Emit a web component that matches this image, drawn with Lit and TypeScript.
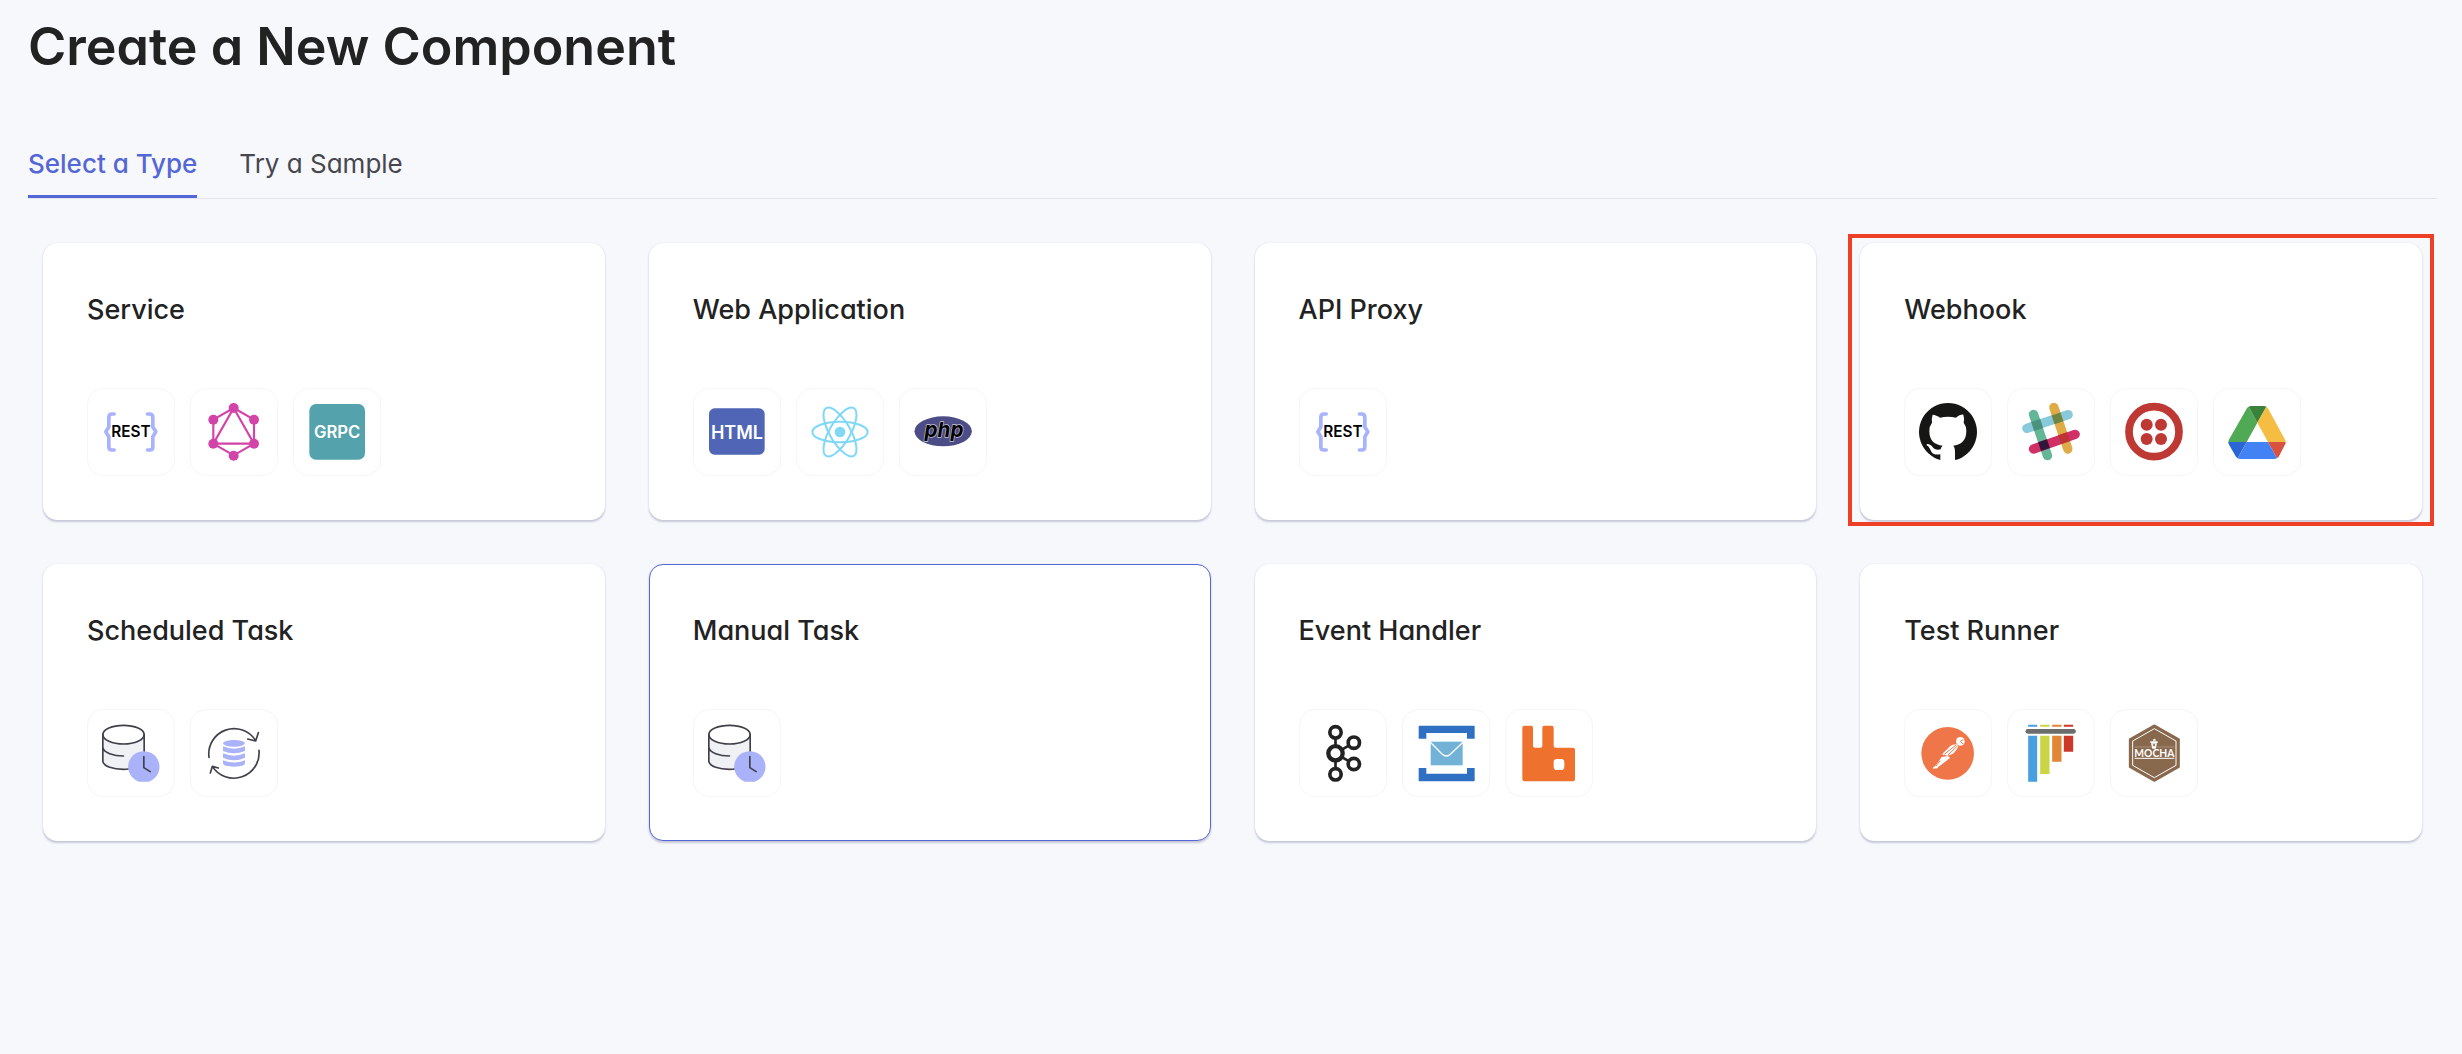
import { LitElement, html, svg, css, nothing, type SVGTemplateResult } from "lit";
import { customElement, state, property } from "lit/decorators.js";
import { classMap } from "lit/directives/class-map.js";

interface Tool {
  name: string;
  /** Centre of the drawing in its own coordinate space. */
  cx: number;
  cy: number;
  art: SVGTemplateResult;
}

interface ComponentType {
  title: string;
  tools: Tool[];
  active?: boolean;
  marked?: boolean;
}

const FONT = "Inter, 'Liberation Sans', sans-serif";

const rest: Tool = {
  name: "REST", cx: 153.5, cy: 156,
  art: svg`
    <g fill="none" stroke="#a9b3fb" stroke-width="11" stroke-linecap="round" stroke-linejoin="round">
      <path d="M103 102H97Q87 102 87 112V141L78 155.500L87 170V200Q87 210 97 210H103"/>
      <path d="M203 102H209Q219 102 219 112V141L228 155.500L219 170V200Q219 210 209 210H203"/>
    </g>
    <text x="153" y="171" font-family=${FONT} font-size="46" font-weight="600" text-anchor="middle" fill="#000">REST</text>`,
};

const graphql: Tool = {
  name: "GraphQL", cx: 462, cy: 156,
  art: svg`
    <path d="M461 84L522 119V191L461 226L400 191V119ZM461 84L522 191H400Z" fill="none" stroke="#d344a8" stroke-width="6.500"/>
    <g fill="#d344a8">
      <circle cx="461" cy="84" r="15"/><circle cx="522" cy="119" r="15"/><circle cx="522" cy="191" r="15"/>
      <circle cx="461" cy="227" r="15"/><circle cx="400" cy="191" r="15"/><circle cx="400" cy="119" r="15"/>
    </g>`,
};

const grpc: Tool = {
  name: "gRPC", cx: 770, cy: 156,
  art: svg`
    <rect x="687" y="72" width="167" height="167" rx="20" fill="#54a3ac"/>
    <text x="770.500" y="173" font-family=${FONT} font-size="50" font-weight="600" text-anchor="middle" fill="#fff">GRPC</text>`,
};

const htmlTool: Tool = {
  name: "HTML", cx: 141, cy: 156,
  art: svg`
    <rect x="57" y="85" width="167" height="139" rx="17" fill="#5065b6"/>
    <text x="141" y="177" font-family=${FONT} font-size="54" font-weight="600" text-anchor="middle" fill="#fff">HTML</text>`,
};

const react: Tool = {
  name: "React", cx: 449, cy: 156,
  art: svg`
    <g fill="none" stroke="#80d8f7" stroke-width="6">
      <ellipse cx="449" cy="156" rx="83" ry="31"/>
      <ellipse cx="449" cy="156" rx="83" ry="31" transform="rotate(60 449 156)"/>
      <ellipse cx="449" cy="156" rx="83" ry="31" transform="rotate(-60 449 156)"/>
    </g>
    <circle cx="449" cy="156" r="16" fill="#80d8f7"/>`,
};

const php: Tool = {
  name: "PHP", cx: 757, cy: 156,
  art: svg`
    <ellipse cx="757.500" cy="154" rx="86" ry="45" fill="#4c4c86"/>
    <text x="760" y="170" font-family=${FONT} font-size="62" font-weight="700" font-style="italic" text-anchor="middle"
      fill="#000" stroke="#c9c9da" stroke-width="4" stroke-linejoin="round" paint-order="stroke">php</text>`,
};

const github: Tool = {
  name: "GitHub", cx: 144, cy: 156,
  art: svg`
    <path fill="#161614" fill-rule="evenodd" d="M121 240A87 87 0 1 1 167 240Q165 241 165 236V213Q165 203 160 197C180 194 199 185 199 153Q199 138 191 128Q194 116 190 104C184 103 176 107 168 113Q144 108 120 113C114 108 104 104 98 104Q94 116 96 128Q88 138 88 153C88 183 104 194 128 197Q123 200 122 208C112 211 102 208 97 200C90 191 78 190 80 196C88 200 91 209 94 215C100 224 110 225 121 223Z"/>`,
};

const slack: Tool = {
  name: "Slack", cx: 452.5, cy: 156,
  art: svg`
    <g fill="none" stroke-width="28" stroke-linecap="round">
      <path d="M380 145L504 104" stroke="#88c9dc"/>
      <path d="M400 103L442 227" stroke="#63b696"/>
      <path d="M461 82L503 207" stroke="#dfab46"/>
      <path d="M400 207L525 163" stroke="#d03066"/>
    </g>
    <rect x="-14" y="-14" width="28" height="28" transform="translate(411 135) rotate(-18.500)" fill="#4a9180"/>
    <rect x="-14" y="-14" width="28" height="28" transform="translate(472 115) rotate(-18.500)" fill="#6d8646"/>
    <rect x="-14" y="-14" width="28" height="28" transform="translate(431.500 195.500) rotate(-18.500)" fill="#341438"/>
    <rect x="-14" y="-14" width="28" height="28" transform="translate(491.500 174.500) rotate(-18.500)" fill="#bd3434"/>`,
};

const twilio: Tool = {
  name: "Twilio", cx: 162, cy: 156,
  art: svg`
    <circle cx="162" cy="155" r="75" fill="none" stroke="#be3934" stroke-width="23"/>
    <g fill="#be3934">
      <circle cx="140" cy="134" r="18"/><circle cx="183" cy="134" r="18"/>
      <circle cx="140" cy="177" r="18"/><circle cx="183" cy="177" r="18"/>
    </g>`,
};

const drive: Tool = {
  name: "Google Drive", cx: 470, cy: 156,
  art: svg`
    <path fill="#50aa55" d="M445 80Q441 82 439 86L387 177Q384 181 384 186H439L471 128Z"/>
    <path fill="#3b813a" d="M445 80Q448 78 453 78H490Q495 78 498 80L471 128Z"/>
    <path fill="#f5bd42" d="M498 80Q502 83 504 87L553 177Q556 181 556 186H503L471 128Z"/>
    <path fill="#2a66d4" d="M384 186H439L412 235Q408 232 406 229L387 196Q384 191 384 186Z"/>
    <path fill="#4382f5" d="M439 186H503L530 235Q526 237 522 237H420Q415 237 412 235Z"/>
    <path fill="#d9513f" d="M503 186H556Q556 191 553 196L536 229Q533 233 530 235Z"/>`,
};

const scheduled: Tool = {
  name: "Scheduled database job", cx: 153.5, cy: 157,
  art: svg`
    <path d="M69 101V182C72 198 100 206 131 206C162 206 193 195 193 182V101Z" fill="#f0f1f5"/>
    <ellipse cx="131" cy="102" rx="62" ry="28" fill="#fff"/>
    <g fill="none" stroke="#40404b" stroke-width="5" stroke-linecap="round">
      <ellipse cx="131" cy="102" rx="62" ry="28"/>
      <path d="M69 102V182C72 198 100 206 131 206C136 206 141 206 146 205M193 102V160M69 140C72 156 100 166 131 166"/>
    </g>
    <path d="M177 243A47 47 0 1 1 207 243Z" fill="#aab3f9"/>
    <path d="M192 168V201L211 213" fill="none" stroke="#40404b" stroke-width="5" stroke-linecap="round" stroke-linejoin="round"/>`,
};

const sync: Tool = {
  name: "Database sync", cx: 462, cy: 157,
  art: svg`
    <g fill="none" stroke="#40404b" stroke-width="5" stroke-linecap="round" stroke-linejoin="round">
      <path d="M387 170A76 76 0 0 1 527 120M503 115L527 121L535 96"/>
      <path d="M537 149A76 76 0 0 1 397 197M415 202L397 197L391 217"/>
    </g>
    <g fill="#aab3f9">
      <ellipse cx="462" cy="128" rx="33" ry="10"/>
      <path d="M429 137Q462 151 495 137V151Q462 165 429 151Z"/>
      <path d="M429 158Q462 172 495 158V171Q462 186 429 171Z"/>
      <path d="M429 179Q462 192 495 179V188Q495 198 462 198Q429 198 429 188Z"/>
    </g>`,
};

const kafka: Tool = {
  name: "Kafka", cx: 157.5, cy: 157,
  art: svg`
    <path d="M135 110V208M135 158L176 134M135 158L176 182" stroke="#222" stroke-width="8" fill="none"/>
    <g fill="#fff" stroke="#222" stroke-width="11">
      <circle cx="135" cy="95" r="17"/><circle cx="135" cy="221" r="17"/>
      <circle cx="190" cy="126" r="17"/><circle cx="190" cy="190" r="17"/>
      <circle cx="135" cy="158" r="21.500" stroke-width="13"/>
    </g>`,
};

const serviceBus: Tool = {
  name: "Azure Service Bus", cx: 466, cy: 157,
  art: svg`
    <path fill="#2f70c2" d="M386 75H550L552 77V114H529V97H407V114H384V77Z"/>
    <path fill="#2f70c2" d="M384 202H407V219H529V202H552V240L550 242H386L384 240Z"/>
    <rect x="420" y="123" width="96" height="71" fill="#71b2d6"/>
    <path d="M419 125L454 160Q467 172 480 160L517 125" fill="none" stroke="#fff" stroke-width="4"/>`,
};

const rabbit: Tool = {
  name: "RabbitMQ", cx: 774, cy: 157,
  art: svg`
    <path fill="#ee712d" fill-rule="evenodd" d="M700 75H720Q726 75 726 81V135Q726 141 732 141H748Q754 141 754 135V81Q754 75 760 75H782Q788 75 788 81V135Q788 141 794 141H846Q852 141 852 147V236Q852 242 846 242H700Q694 242 694 236V81Q694 75 700 75ZM798 175Q788 175 788 185V198Q788 208 798 208H810Q820 208 820 198V185Q820 175 810 175Z"/>`,
};

const postman: Tool = {
  name: "Postman", cx: 144, cy: 157,
  art: svg`
    <circle cx="143" cy="158" r="79" fill="#ee7648"/>
    <circle cx="181" cy="122" r="13" fill="#fff"/>
    <path d="M126 161L151 136Q160 130 169 131L175 137Q171 149 159 159L143 165Z" fill="#fff"/>
    <path d="M125 169L144 166L150 172L119 196Q112 199 113 203L98 204Q98 200 105 197Z" fill="#fff"/>
    <path d="M133 161L168 133M144 163L172 136M181 122L190 117M181 122L189 130M120 180L108 196" stroke="#ee7648" stroke-width="3" fill="none"/>`,
};

const pytest: Tool = {
  name: "pytest", cx: 452.5, cy: 157,
  art: svg`
    <path fill="#489fdf" d="M384 72H411V78H384ZM384 105H411V243H384Z"/>
    <path fill="#cad546" d="M420 72H448V78H420ZM420 105H448V220H420Z"/>
    <path fill="#e08636" d="M456 72H484V78H456ZM456 105H484V183H456Z"/>
    <path fill="#cd3828" d="M491 72H519V78H491ZM491 105H519V153H491Z"/>
    <rect x="376" y="85" width="151" height="14" rx="7" fill="#6a6d6c"/>`,
};

const mocha: Tool = {
  name: "Mocha", cx: 761, cy: 157,
  art: svg`
    <path d="M762 74L836 116V199L762 241L688 199V116Z" fill="#89694e" stroke="#89694e" stroke-width="5" stroke-linejoin="round"/>
    <path d="M762 84L827 121V194L762 231L697 194V121Z" fill="none" stroke="#fff" stroke-width="3"/>
    <rect x="700" y="137" width="124" height="37" fill="#89694e"/>
    <path d="M703 139H822" stroke="#b7a595" stroke-width="2"/>
    <path d="M703 173H822" stroke="#fff" stroke-width="3"/>
    <path d="M752 128H770L766 144H756ZM750 122H772V127H750ZM758 120Q757 115 762 114Q768 116 766 120Z" fill="#fff"/>
    <path d="M757 131H765L763 137H759Z" fill="#89694e"/>
    <text x="762" y="168" font-family="Lato, sans-serif" font-size="31" font-weight="700" text-anchor="middle" fill="#fff">MOCHA</text>`,
};

const TYPES: ComponentType[] = [
  { title: "Service", tools: [rest, graphql, grpc] },
  { title: "Web Application", tools: [htmlTool, react, php] },
  { title: "API Proxy", tools: [rest] },
  { title: "Webhook", tools: [github, slack, twilio, drive], marked: true },
  { title: "Scheduled Task", tools: [scheduled, sync] },
  { title: "Manual Task", tools: [scheduled], active: true },
  { title: "Event Handler", tools: [kafka, serviceBus, rabbit] },
  { title: "Test Runner", tools: [postman, pytest, mocha] },
];

@customElement("type-card")
export class TypeCard extends LitElement {
  @property({ attribute: false }) type!: ComponentType;

  static styles = css`
    :host {
      display: block;
      position: relative;
    }
    .card {
      display: flex;
      flex-direction: column;
      gap: 61px;
      width: 100%;
      box-sizing: border-box;
      padding: 49px 43px 43px;
      border: 1px solid #fff;
      border-radius: 14px;
      background: #fff;
      box-shadow: 0 2px 2px #c6c9d8, 0 0 2px #e3e5ee;
      color: #222;
      font: inherit;
      text-align: left;
      cursor: pointer;
    }
    .active {
      border-color: #5567d5;
    }
    .title {
      font-size: 27px;
      line-height: 34px;
      font-weight: 500;
    }
    .tools {
      display: flex;
      gap: 15px;
    }
    .tile {
      display: flex;
      align-items: center;
      justify-content: center;
      width: 88px;
      height: 88px;
      box-sizing: border-box;
      border: 1px solid #f5f6fa;
      border-radius: 16px;
    }
    .art {
      width: 58px;
      height: 58px;
      overflow: visible;
    }
    .marker {
      position: absolute;
      inset: -9px -12px -6px;
      border: 4px solid #ee4027;
      pointer-events: none;
    }
  `;

  render() {
    const { title, tools, active, marked } = this.type;
    return html`
      <button type="button" class=${classMap({ card: true, active: !!active })}>
        <span class="title">${title}</span>
        <span class="tools">
          ${tools.map(
            (t) => html`<span class="tile">
              <svg class="art" viewBox="${t.cx - 87} ${t.cy - 87} 174 174" role="img" aria-label=${t.name}>${t.art}</svg>
            </span>`
          )}
        </span>
      </button>
      ${marked ? html`<div class="marker"></div>` : nothing}
    `;
  }
}

@customElement("app-root")
export class AppRoot extends LitElement {
  @state() private tab = 0;

  static styles = css`
    :host {
      display: block;
      min-height: 100vh;
      box-sizing: border-box;
      padding: 17px 25px 44px 28px;
      background: #f7f8fc;
      color: #222;
      font-family: Inter, "Liberation Sans", sans-serif;
      font-feature-settings: "cv11";
    }
    .heading {
      margin: 0;
      font-size: 52px;
      line-height: 60px;
      font-weight: 600;
    }
    .tabs {
      display: flex;
      gap: 42px;
      margin-top: 71px;
      border-bottom: 1px solid #e4e5ec;
    }
    .tab {
      padding: 0 0 15px;
      border: 0;
      border-bottom: 3px solid transparent;
      background: none;
      color: #46474f;
      font: inherit;
      font-size: 26px;
      line-height: 32px;
      cursor: pointer;
    }
    .current {
      border-color: #5567d5;
      color: #5567d5;
      font-weight: 500;
    }
    .grid {
      display: grid;
      grid-template-columns: repeat(4, minmax(0, 1fr));
      gap: 44px;
      padding: 44px 15px 0;
    }
  `;

  render() {
    return html`
      <h1 class="heading">Create a New Component</h1>
      <div class="tabs" role="tablist">
        ${["Select a Type", "Try a Sample"].map(
          (label, i) => html`<button
            type="button"
            role="tab"
            aria-selected=${i === this.tab ? "true" : "false"}
            class=${classMap({ tab: true, current: i === this.tab })}
            @click=${() => (this.tab = i)}
          >${label}</button>`
        )}
      </div>
      <main class="grid">
        ${TYPES.map((type) => html`<type-card .type=${type}></type-card>`)}
      </main>
    `;
  }
}
